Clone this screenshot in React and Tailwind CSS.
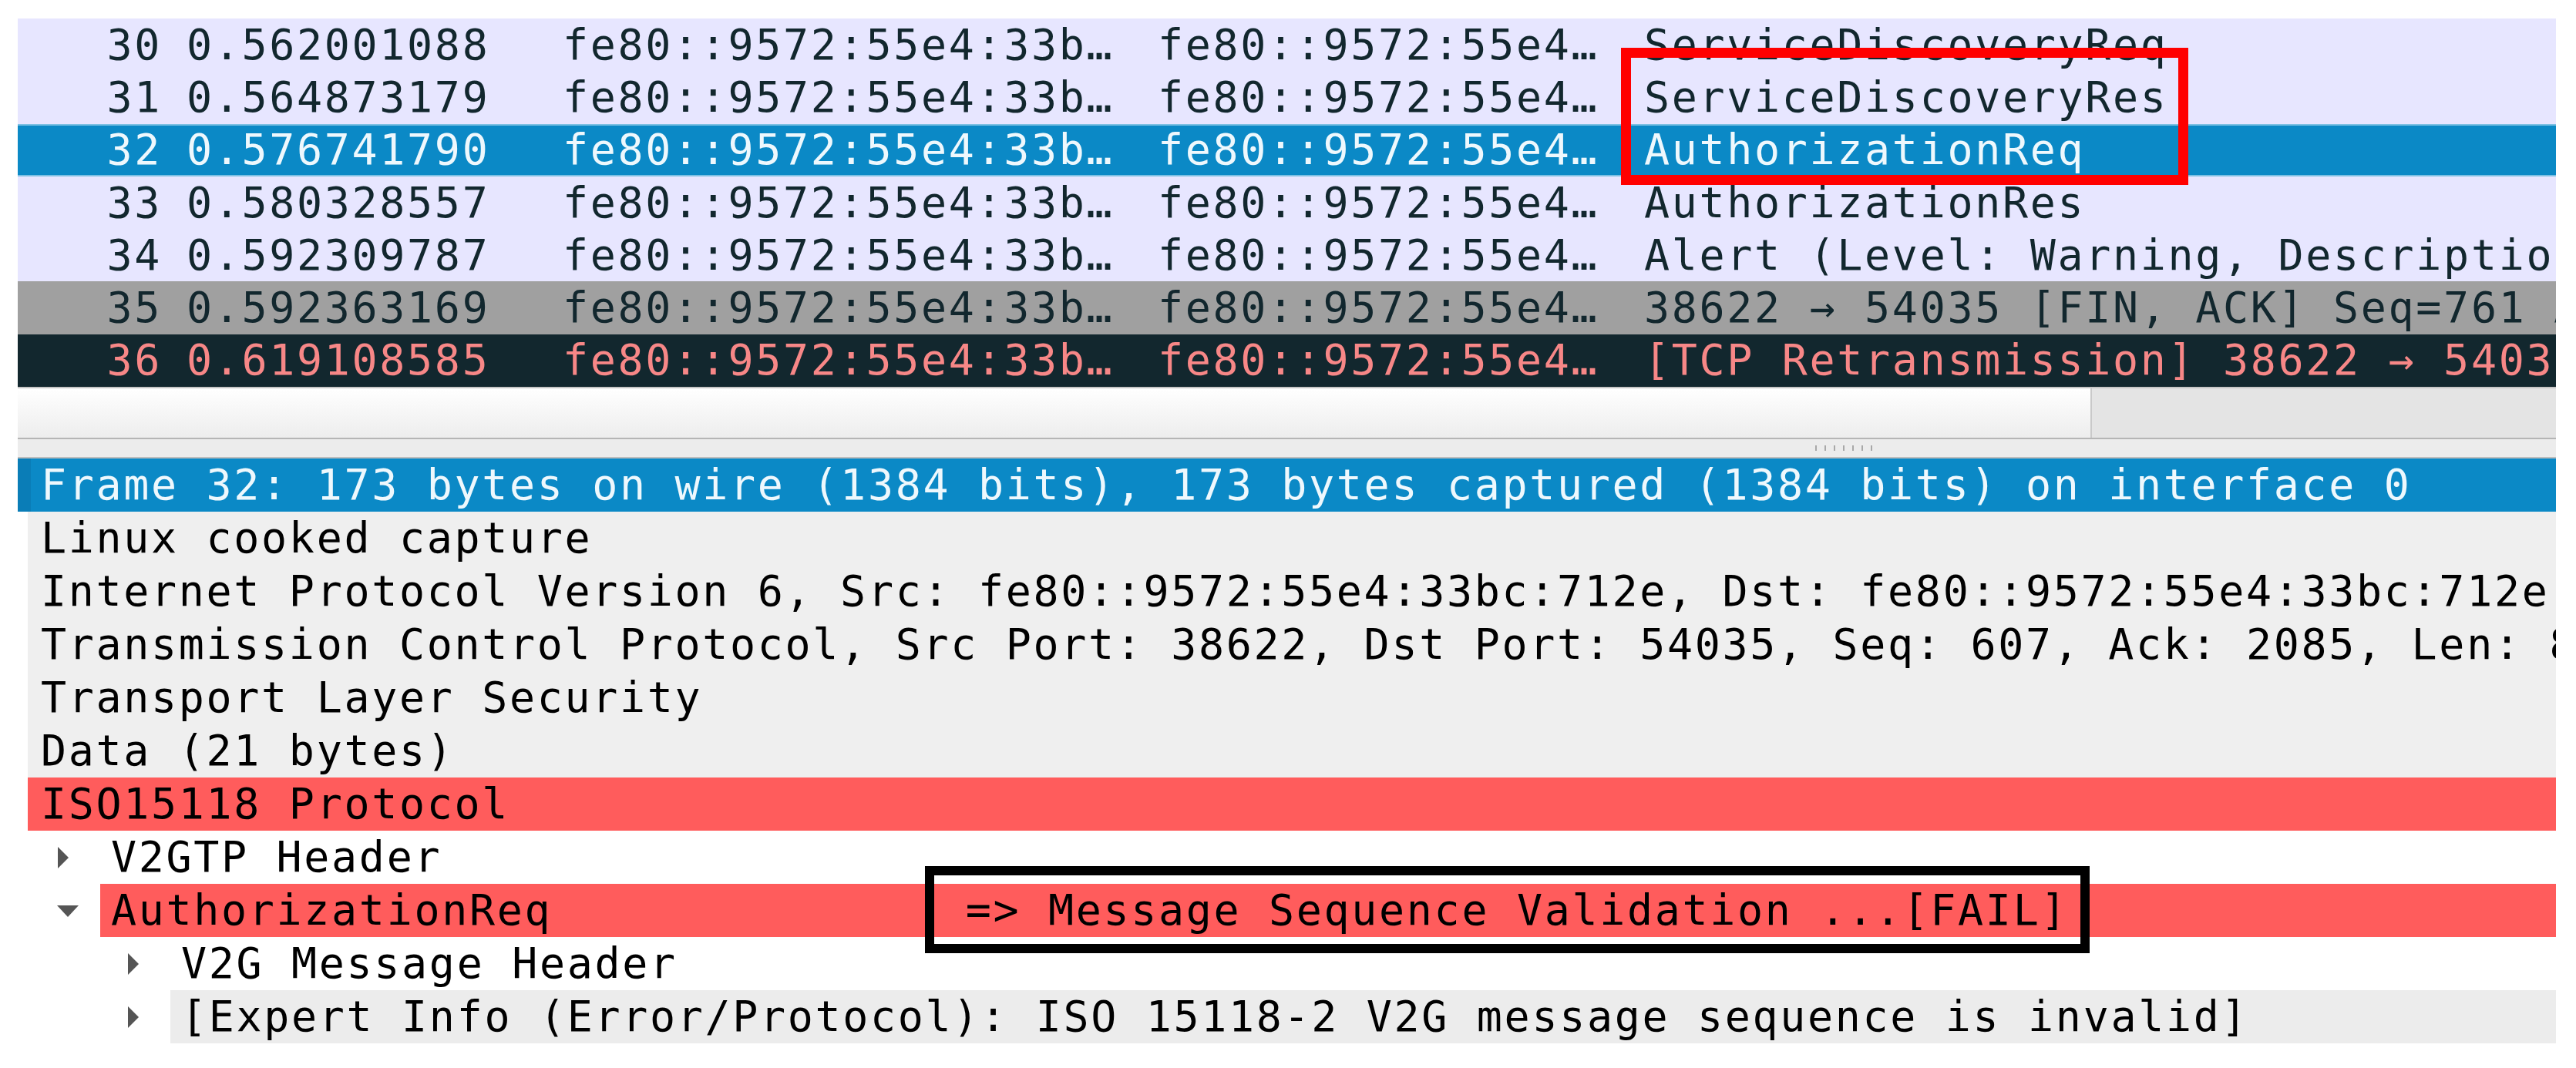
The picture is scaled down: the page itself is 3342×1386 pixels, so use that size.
import React from 'react';

const mono = "font-['DejaVu_Sans_Mono',monospace] text-[55px] leading-none tracking-[2.65px]";

const packets = [
  { no: '30', time: '0.562001088', info: 'ServiceDiscoveryReq', row: 'bg-[#e7e6ff] text-[#12272e]' },
  { no: '31', time: '0.564873179', info: 'ServiceDiscoveryRes', row: 'bg-[#e7e6ff] text-[#12272e]' },
  { no: '32', time: '0.576741790', info: 'AuthorizationReq', row: 'bg-[#0b89c6] text-[#eef8fd] border-y-2 border-[#7cc0e3]' },
  { no: '33', time: '0.580328557', info: 'AuthorizationRes', row: 'bg-[#e7e6ff] text-[#12272e]' },
  { no: '34', time: '0.592309787', info: 'Alert (Level: Warning, Description: Close Notify)', row: 'bg-[#e7e6ff] text-[#12272e]' },
  { no: '35', time: '0.592363169', info: '38622 → 54035 [FIN, ACK] Seq=761 Ack=2085 Win=512 Len=0', row: 'bg-[#a0a0a0] text-[#12272e]' },
  { no: '36', time: '0.619108585', info: '[TCP Retransmission] 38622 → 54035 [FIN, PSH, ACK] Seq=607', row: 'bg-[#12272e] text-[#f78787]' },
];

function RightArrow() {
  return (
    <svg width="18" height="30" viewBox="0 0 18 30">
      <polygon points="2,1 16,15 2,29" fill="#555555" />
    </svg>
  );
}

function DownArrow() {
  return (
    <svg width="30" height="18" viewBox="0 0 30 18">
      <polygon points="1,2 29,2 15,17" fill="#555555" />
    </svg>
  );
}

function PacketRow({ p }) {
  return (
    <div className={`flex h-[68.3px] items-center overflow-hidden whitespace-nowrap ${p.row}`}>
      <span className="w-[187px] shrink-0 text-right">{p.no}</span>
      <span className="ml-[32px] w-[488px] shrink-0">{p.time}</span>
      <span className="w-[772px] shrink-0">fe80::9572:55e4:33b…</span>
      <span className="w-[631px] shrink-0">fe80::9572:55e4…</span>
      <span className="shrink-0">{p.info}</span>
    </div>
  );
}

// one line of the detail tree
function TreeRow({ level = 0, arrow = null, bg = '', children }) {
  const indent = ['w-[13px]', 'w-[107px]', 'w-[198px]'][level];
  const arrowPos = ['', 'pl-[50px]', 'pl-[141px]'][level];
  return (
    <div className="flex h-[69px] items-stretch overflow-hidden whitespace-pre text-black">
      <div className={`${indent} ${arrowPos} flex shrink-0 items-center`}>
        {arrow === 'right' && <RightArrow />}
        {arrow === 'down' && <DownArrow />}
      </div>
      <div className={`flex flex-1 items-center overflow-hidden ${level === 0 ? 'pl-[17px]' : 'pl-[14px]'} ${bg}`}>
        {children}
      </div>
    </div>
  );
}

export default function App() {
  return (
    <div className={`relative h-[1386px] w-[3342px] overflow-hidden bg-white pt-[24px] pr-[26px] pl-[23px] ${mono}`}>
      {/* Packet list */}
      <div className="flex flex-col">
        {packets.map((p) => (
          <PacketRow key={p.no} p={p} />
        ))}
      </div>

      {/* Horizontal scrollbar */}
      <div className="flex h-[66px] border-t-2 border-[#c6c6c6]">
        <div className="w-[2691px] bg-gradient-to-b from-[#ffffff] to-[#ededed] border-r-2 border-[#c9c9c9]" />
        <div className="flex-1 bg-[#e4e4e4]" />
      </div>

      {/* Splitter */}
      <div className="h-[2px] bg-[#b5b5b5]" />
      <div className="flex h-[23px] items-center bg-[#ececec] pl-[2332px] gap-[10px]">
        {[0, 1, 2, 3, 4, 5, 6].map((i) => (
          <div key={i} className="h-[7px] w-[2px] bg-[#a8a8a8]" />
        ))}
      </div>
      <div className="h-[2px] bg-[#bdbdbd]" />

      {/* Packet details */}
      <div className="flex flex-col">
        <div className="flex h-[69px] items-stretch overflow-hidden whitespace-pre bg-[#0b89c6] text-[#eef8fd]">
          <div className="w-[17px] shrink-0 bg-[#0a7db7]" />
          <div className="flex items-center pl-[13px]">
            Frame 32: 173 bytes on wire (1384 bits), 173 bytes captured (1384 bits) on interface 0
          </div>
        </div>
        <TreeRow bg="bg-[#efefef]">Linux cooked capture</TreeRow>
        <TreeRow bg="bg-[#efefef]">
          Internet Protocol Version 6, Src: fe80::9572:55e4:33bc:712e, Dst: fe80::9572:55e4:33bc:712e
        </TreeRow>
        <TreeRow bg="bg-[#efefef]">
          Transmission Control Protocol, Src Port: 38622, Dst Port: 54035, Seq: 607, Ack: 2085, Len: 85
        </TreeRow>
        <TreeRow bg="bg-[#efefef]">Transport Layer Security</TreeRow>
        <TreeRow bg="bg-[#efefef]">Data (21 bytes)</TreeRow>
        <TreeRow bg="bg-[#ff5c5c]">ISO15118 Protocol</TreeRow>
        <TreeRow level={1} arrow="right">V2GTP Header</TreeRow>
        <TreeRow level={1} arrow="down" bg="bg-[#ff5c5c]">
          {'AuthorizationReq               => Message Sequence Validation ...[FAIL]'}
        </TreeRow>
        <TreeRow level={2} arrow="right">V2G Message Header</TreeRow>
        <TreeRow level={2} arrow="right" bg="bg-[#ececec]">
          [Expert Info (Error/Protocol): ISO 15118-2 V2G message sequence is invalid]
        </TreeRow>
      </div>

      {/* Annotation boxes drawn over the capture */}
      <div className="absolute left-[2103px] top-[62px] h-[178px] w-[736px] border-[13px] border-[#ff0000]" />
      <div className="absolute left-[1200px] top-[1124px] h-[113px] w-[1511px] border-[12px] border-black" />
    </div>
  );
}
